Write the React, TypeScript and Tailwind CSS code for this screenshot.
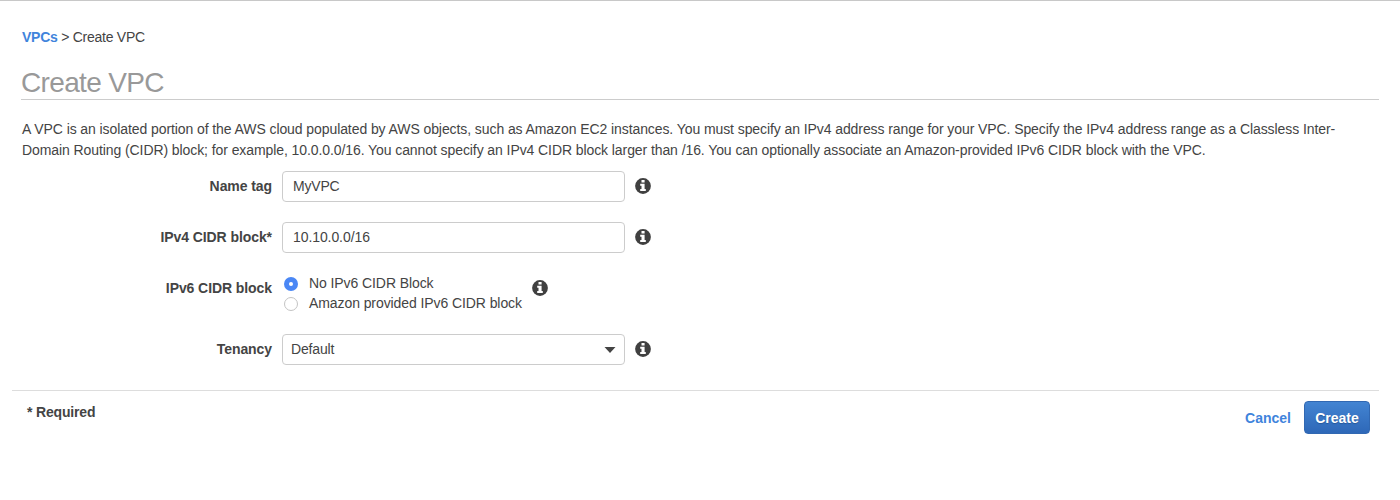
import React from 'react';

function Info() {
  return (
    <svg className="mb-px block h-4 w-4 shrink-0" viewBox="0 0 16 16" aria-hidden="true">
      <circle cx="8" cy="8" r="7.9" fill="#404040" />
      <path d="M6.5 2h3.1v2.4H6.5zM5.2 5.7h4.4v5.2h1.2v2.2H5.2v-2.2h1.3V7.8H5.2z" fill="#fff" />
    </svg>
  );
}

function Label({ children }: { children: React.ReactNode }) {
  return <div className="mr-[10px] w-[250px] shrink-0 whitespace-nowrap text-right font-bold tracking-[-0.08px]">{children}</div>;
}

export default function App() {
  return (
    <div className="h-[500px] w-full overflow-hidden border-t border-[#c8c8c8] bg-white pl-[22px] pr-[21px] font-['Liberation_Sans',Arial,sans-serif] text-[14px] leading-[21px] tracking-[-0.084px] text-[#444]">
      <nav className="mt-[26px] h-[21px] whitespace-nowrap tracking-[-0.26px]">
        <a href="#" className="font-bold text-[#3f84dc]">VPCs</a> &gt; Create VPC
      </nav>
      <h1 className="-ml-px mt-[19px] h-[33px] border-b border-[#ccc] text-[28px] leading-[31px] tracking-[-0.65px] text-[#999]">Create VPC</h1>
      <p className="mt-[19px] h-[42px] whitespace-nowrap">
        A VPC is an isolated portion of the AWS cloud populated by AWS objects, such as Amazon EC2 instances. You must specify an IPv4 address range for your VPC. Specify the IPv4 address range as a Classless Inter-<br />
        Domain Routing (CIDR) block; for example, 10.0.0.0/16. You cannot specify an IPv4 CIDR block larger than /16. You can optionally associate an Amazon-provided IPv6 CIDR block with the VPC.
      </p>
      <form className="mt-[10px]">
        <div className="flex h-[31px] items-center">
          <Label>Name tag</Label>
          <input className="mr-[10px] h-[31px] w-[343px] rounded-[4px] border border-[#ccc] px-[10px] pb-px tracking-[-0.2px]" defaultValue="MyVPC" />
          <Info />
        </div>
        <div className="mt-5 flex h-[31px] items-center">
          <Label>IPv4 CIDR block*</Label>
          <input className="mr-[10px] h-[31px] w-[343px] rounded-[4px] border border-[#ccc] px-[10px] pb-px" defaultValue="10.10.0.0/16" />
          <Info />
        </div>
        <div className="mt-5 flex h-[31px] items-center">
          <Label>IPv6 CIDR block</Label>
          <div className="mr-[10px] mt-[9px] w-[240px] whitespace-nowrap pl-[2px]">
            <div className="flex h-[21px] items-center"><span className="mr-[11px] mt-px flex h-[14px] w-[14px] shrink-0 items-center justify-center rounded-full bg-[#4a87f5]"><i className="h-1 w-1 rounded-full bg-white" /></span>No IPv6 CIDR Block</div>
            <div className="flex h-[19px] items-center"><span className="mr-[11px] h-[14px] w-[14px] shrink-0 rounded-full border border-[#c4c4c4]" />Amazon provided IPv6 CIDR block</div>
          </div>
          <Info />
        </div>
        <div className="mt-[30px] flex h-[31px] items-center">
          <Label>Tenancy</Label>
          <button type="button" className="mr-[10px] flex h-[31px] w-[343px] items-center justify-between rounded-[4px] border border-[#ccc] px-2 tracking-[-0.15px]">
            Default
            <svg className="h-[6px] w-3" viewBox="0 0 12 6"><path d="M.5 0h11L6 6z" fill="#444" /></svg>
          </button>
          <Info />
        </div>
      </form>
      <footer className="-ml-[10px] mt-[25px] flex justify-between border-t border-[#ddd] pt-[10px] font-bold">
        <span className="ml-[15px] mt-px tracking-[-0.17px]">* Required</span>
        <div className="mr-[9px] flex h-[33px] items-center gap-[13px]">
          <a href="#" className="pt-px tracking-normal text-[#3f84dc]">Cancel</a>
          <button className="h-[33px] w-[66px] rounded-[4px] border border-[#3168b2] bg-linear-to-b from-[#4384d2] to-[#2e68b8] pt-px tracking-normal text-white [text-shadow:0_1px_1px_#24589a]">Create</button>
        </div>
      </footer>
    </div>
  );
}
